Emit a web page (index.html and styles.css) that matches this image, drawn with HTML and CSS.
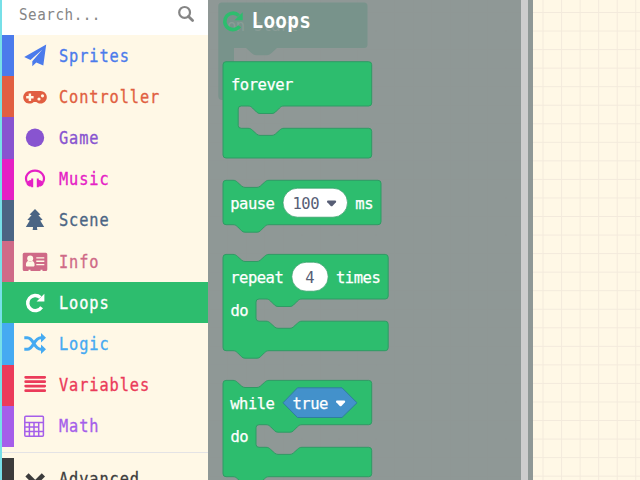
FILE: index.html
```
<!DOCTYPE html>
<html lang="en">
<head>
<meta charset="utf-8">
<title>Blocks editor</title>
<link rel="stylesheet" href="styles.css">
</head>
<body>
<div class="editor">
  <nav class="toolbox">
    <div class="search">
      <span class="search-text">Search...</span>
      <svg class="search-icon" viewBox="0 0 18 18"><circle cx="7.600" cy="7.400" r="5.400"/><path d="M11.500 11.500L15.600 15.600"/></svg>
    </div>
    <div class="row sprites"><svg class="icon" viewBox="0 0 26 26"><path d="M24.200 1.500L2.200 14.100l6.300 2.900L20.400 6.600 10.300 18.300v5l4-3.700 7 2.900z"/></svg><span class="label">Sprites</span></div>
    <div class="row controller"><svg class="icon" viewBox="0 0 26 26"><path d="M8 7h10.500a6.300 6.300 0 1 1-4.200 11h-2.600A6.300 6.300 0 1 1 8 7z"/><path class="cut" d="M6.700 9.500h2.400v2.500h2.500v2.500H9.100v2.500H6.700v-2.500H4.200v-2.500h2.500z"/><circle class="cut" cx="17" cy="15" r="1.600"/><circle class="cut" cx="20.500" cy="11.800" r="1.600"/></svg><span class="label">Controller</span></div>
    <div class="row game"><svg class="icon" viewBox="0 0 26 26"><circle cx="13" cy="12.700" r="9.200"/></svg><span class="label">Game</span></div>
    <div class="row music"><svg class="icon" viewBox="0 0 26 26"><path class="line" stroke-width="2.200" d="M5 16.500C1.800 10 7 4.600 13 4.600s11.200 5.400 8 11.900"/><path d="M11.200 12.500v8.800H9.200v-.7c-2.400 0-4.400-1.300-4.900-3.400.8-2 2.500-2.900 4.900-3.200v-1.500zM14.800 12.500v8.800h2v-.7c2.400 0 4.400-1.300 4.900-3.400-.8-2-2.500-2.900-4.900-3.200v-1.500z"/></svg><span class="label">Music</span></div>
    <div class="row scene"><svg class="icon" viewBox="0 0 26 26"><path d="M13 2l5.400 5.500-2 .7 4.200 4.600-2.400.7 4 6.600h-7.200c0 1.100.1 1.900.4 2.900h-4.800c.3-1 .4-1.800.4-2.900H3.800l4-6.600-2.400-.7 4.200-4.600-2-.7z"/></svg><span class="label">Scene</span></div>
    <div class="row info"><svg class="icon" viewBox="0 0 26 26"><path d="M2.200 3.800h21.600q1.500 0 1.500 1.500v15.200q0 1.500-1.500 1.500h-3.300v-1.300h-2V22H8.500v-1.300h-2V22H2.200Q.7 22 .7 20.500V5.300q0-1.500 1.500-1.500z"/><circle class="cut" cx="8.200" cy="9.600" r="3"/><path class="cut" d="M3.900 16c0-2.300 1-3.700 2.500-3.900a3.200 3.200 0 0 0 3.600 0c1.600.2 2.600 1.600 2.600 3.900 0 1-.7 1.600-1.500 1.600H5.400c-.9 0-1.500-.6-1.500-1.600zM14.300 8.300h8v1.300h-8zM14.300 11.500h8v1.400h-8zM14.300 15h8v1.300h-8z"/></svg><span class="label">Info</span></div>
    <div class="row loops"><svg class="icon" viewBox="0 0 26 26"><path class="line" stroke-width="3.400" d="M19.600 17.300a7.600 7.600 0 1 1-1.200-9.900"/><path d="M22.400 3.800v7.800h-7.800z"/></svg><span class="label">Loops</span></div>
    <div class="row logic"><svg class="icon" viewBox="0 0 26 26"><path class="line" stroke-width="3.100" d="M2.300 6.700h3C12 6.700 11.500 18.200 19 18.200h1M2.300 18.200h3C12 18.200 11.500 6.700 19 6.700h1"/><path d="M19 2l5 4.700-5 4.700zM19 13.500l5 4.700-5 4.700z"/></svg><span class="label">Logic</span></div>
    <div class="row variables"><svg class="icon" viewBox="0 0 26 26"><path class="line" stroke-width="2.800" stroke-linecap="round" d="M3.700 5.300h19M3.700 9.700h19M3.700 14.100h19M3.700 18.700h19"/></svg><span class="label">Variables</span></div>
    <div class="row math"><svg class="icon" viewBox="0 0 26 26"><path class="line" stroke-width="1.500" d="M3.800 3.200h16.600q1 0 1 1v18q0 1-1 1H3.800q-1 0-1-1v-18q0-1 1-1zM2.800 9.500h18.600M2.800 14h13.800M2.800 18.600h18.600M7.400 9.500v13.700M12 9.500v13.700M16.700 9.500v13.700"/></svg><span class="label">Math</span></div>
    <div class="divider"></div>
    <div class="row advanced"><svg class="icon" viewBox="0 0 26 26"><path class="line" stroke-width="4.600" d="M5 8.900l8.200 8.200 8.200-8.200"/></svg><span class="label">Advanced</span></div>
  </nav>
  <main class="workspace">
    <section class="flyout">
      <svg class="blocks" viewBox="208 0 313 480">
        <g class="ghost">
          <path d="M222 2.500H364q3.500 0 3.500 3.500V44.500q0 3.500-3.500 3.500H277l-6 5.500q-2 1.700-4 1.700H256q-2 0-4-1.700L246 48H234V100H222q-3.700 0-3.700-4V6q0-3.500 3.700-3.500z"/>
          <text x="227" y="31">on start</text>
        </g>
        <g class="title">
          <path class="title-line" d="M239.600 26.200a8.200 8.200 0 1 1-.9-10.700"/>
          <path class="title-arrow" d="M242.700 12.200v8h-8.200z"/>
          <text transform="translate(251.500 28.300) scale(0.880 1)">Loops</text>
        </g>
        <g class="block">
          <path d="M226 61.700H368.700q3 0 3 3V103q0 3-3 3H284c-2 0-3 .6-4.500 2l-4 4q-1.500 1.500-3.500 1.500H260q-2 0-3.500-1.500l-4-4c-1.500-1.400-2.500-2-4.500-2H241.200q-3 0-3 3v16.300q0 3 3 3H248c2 0 3 .6 4.500 2l4 3.600q1.500 1.500 3.500 1.500h12q2 0 3.500-1.500l4-3.600c1.500-1.400 2.500-2 4.500-2h84.700q3 0 3 3V155q0 3-3 3H226q-3 0-3-3V64.700q0-3 3-3z"/>
          <text x="231" y="89.500">forever</text>
        </g>
        <g class="block">
          <path d="M226 180.300h7c2 0 3 .6 4.500 2l4 3.600q1.500 1.500 3.500 1.500h12q2 0 3.500-1.500l4-3.600c1.500-1.400 2.500-2 4.500-2h109q3 0 3 3v38.400q0 3-3 3H269c-2 0-3 .6-4.500 2l-4 4q-1.500 1.500-3.500 1.500H245q-2 0-3.500-1.500l-4-4c-1.500-1.400-2.500-2-4.500-2h-7q-3 0-3-3v-38.400q0-3 3-3z"/>
          <text x="230.200" y="208.700">pause</text>
          <rect class="field" x="283" y="188.200" width="64.500" height="29" rx="14.500"/>
          <text class="dark" x="292.500" y="208.700">100</text>
          <path class="caret" d="M328 200.500h7.200q1.800.3.700 1.700l-3.200 3.500q-1.100 1-2.200 0l-3.200-3.500q-1.100-1.400.7-1.700z"/>
          <text x="355.300" y="208.700">ms</text>
        </g>
        <g class="block">
          <path d="M226 254.400h7c2 0 3 .6 4.500 2l4 3.600q1.500 1.500 3.500 1.500h12q2 0 3.500-1.500l4-3.600c1.500-1.400 2.500-2 4.500-2h116.200q3 0 3 3V296q0 3-3 3H302c-2 0-3 .6-4.500 2l-4 4q-1.500 1.500-3.500 1.500H278q-2 0-3.500-1.500l-4-4c-1.500-1.400-2.500-2-4.500-2h-7q-3 0-3 3v16.200q0 3 3 3h7c2 0 3 .6 4.500 2l4 3.600q1.500 1.500 3.500 1.500h12q2 0 3.500-1.500l4-3.600c1.500-1.400 2.500-2 4.500-2h83.200q3 0 3 3v23.500q0 3-3 3H269c-2 0-3 .6-4.500 2l-4 4q-1.500 1.500-3.500 1.500H245q-2 0-3.500-1.500l-4-4c-1.500-1.400-2.500-2-4.500-2h-7q-3 0-3-3V257.400q0-3 3-3z"/>
          <text x="230.200" y="283">repeat</text>
          <rect class="field" x="291.800" y="262.200" width="36.400" height="29" rx="14.500"/>
          <text class="dark" x="305.300" y="283">4</text>
          <text x="336" y="283">times</text>
          <text x="230.400" y="315.800">do</text>
        </g>
        <g class="block">
          <path d="M226 380.400h7c2 0 3 .6 4.500 2l4 3.600q1.500 1.500 3.500 1.500h12q2 0 3.500-1.500l4-3.600c1.500-1.400 2.500-2 4.500-2h99.700q3 0 3 3v38.300q0 3-3 3H302c-2 0-3 .6-4.500 2l-4 4q-1.500 1.500-3.500 1.500H278q-2 0-3.500-1.500l-4-4c-1.500-1.400-2.500-2-4.500-2h-7q-3 0-3 3v16.600q0 3 3 3h7c2 0 3 .6 4.500 2l4 3.600q1.500 1.500 3.500 1.500h12q2 0 3.500-1.500l4-3.600c1.500-1.400 2.500-2 4.500-2h66.700q3 0 3 3v23.400q0 3-3 3H269c-2 0-3 .6-4.500 2l-4 4q-1.500 1.500-3.500 1.500H245q-2 0-3.500-1.500l-4-4c-1.500-1.400-2.500-2-4.500-2h-7q-3 0-3-3V383.400q0-3 3-3z"/>
          <text x="230.200" y="408.500">while</text>
          <path class="hex" d="M297.500 387.800h44.500l15 15-15 14.700h-44.500l-14.500-14.700z"/>
          <text x="292.500" y="408.500">true</text>
          <path class="caret light" d="M337 400.500h7.200q1.800.3.700 1.700l-3.200 3.500q-1.100 1-2.200 0l-3.200-3.500q-1.100-1.400.7-1.700z"/>
          <text x="230.400" y="441.800">do</text>
        </g>
      </svg>
      <div class="scrollbar"></div>
    </section>
  </main>
</div>
</body>
</html>
```
FILE: styles.css
```
* { box-sizing: border-box; }
body { margin: 0; overflow: hidden; font-family: "DejaVu Sans Mono", monospace; }
.editor { display: flex; width: 640px; height: 480px; overflow: hidden; }

.toolbox {
  width: 208.3px; height: 480px; flex: none; overflow: hidden;
  border-left: 2px solid #77e0e8; background: #fff8e6;
}
.search {
  display: flex; justify-content: space-between; align-items: center;
  height: 35px; padding: 0 13px 7px 17px; background: #fff;
}
.search-text {
  font-size: 16px; color: #858585; letter-spacing: 0.600px;
  transform: scaleX(0.890); transform-origin: left;
}
.search-icon { width: 18px; height: 18px; fill: none; stroke: #858585; stroke-width: 2.200; }
.search-icon path { stroke-width: 2.800; stroke-linecap: round; }

.row {
  --ink: #333;
  --cut: #fff8e6;
  display: flex; align-items: center; height: 41.200px;
  border-left: 12.500px solid var(--ink); padding-left: 7.800px; color: var(--ink);
}
.icon { width: 26px; height: 26px; flex: none; fill: currentColor; }
.icon .cut { fill: var(--cut); }
.icon .line { fill: none; stroke: currentColor; }
.label {
  margin-left: 11.200px; font-size: 17.800px; line-height: 26px; letter-spacing: 1.060px;
  transform: scaleX(0.860); transform-origin: left;
  -webkit-text-stroke: 0.350px currentColor;
}
.sprites { --ink: #4b7bec; }
.controller { --ink: #e15f41; }
.game { --ink: #8854d0; }
.music { --ink: #e520c5; }
.scene { --ink: #4b6584; }
.info { --ink: #cf6a87; }
.loops { --ink: #2dbd6e; background: #2dbd6e; color: #fff; }
.logic { --ink: #45aaf2; }
.variables { --ink: #eb3b5a; }
.math { --ink: #a55eea; }
.advanced { --ink: #3c3c3c; }
.divider { height: 11.500px; display: flex; align-items: center; }
.divider::before { content: ""; flex: 1; height: 1px; background: #e4e3e5; }

.workspace {
  flex: 1; height: 480px;
  background-color: #fff8e6;
  background-image:
    linear-gradient(to right, #f3eadc 1.300px, transparent 1.300px),
    linear-gradient(to bottom, #f3eadc 1.300px, transparent 1.300px);
  background-size: 18.560px 18.560px;
  background-position: 0.700px 12px;
}
.flyout {
  display: flex; width: 324.500px; height: 480px;
  background: rgba(136, 146, 145, 0.940);
}
.blocks { width: 313px; height: 480px; flex: none; font-size: 15.500px; letter-spacing: -0.480px; }
.scrollbar { width: 6.500px; background: #cdcdcd; }
.ghost path { fill: #78938b; }
.ghost text { fill: #8a9d97; }
.title text { font-size: 22px; font-weight: bold; fill: #fff; letter-spacing: 0.300px; }
.title-line { fill: none; stroke: #2dbd6e; stroke-width: 3.600; }
.title-arrow { fill: #2dbd6e; }
.block path { fill: #2dbd6e; stroke: #2f9b64; stroke-width: 1; }
.block text { fill: #fff; stroke: #fff; stroke-width: 0.250; }
.block .field { fill: #fff; stroke: #2f9b64; stroke-width: 0.700; }
.block .dark { fill: #575e75; stroke: none; }
.block .caret { fill: #575e75; stroke: none; }
.block .caret.light { fill: #fff; stroke: none; }
.block .hex { fill: #4391cb; stroke: #2f7f9c; }
```
